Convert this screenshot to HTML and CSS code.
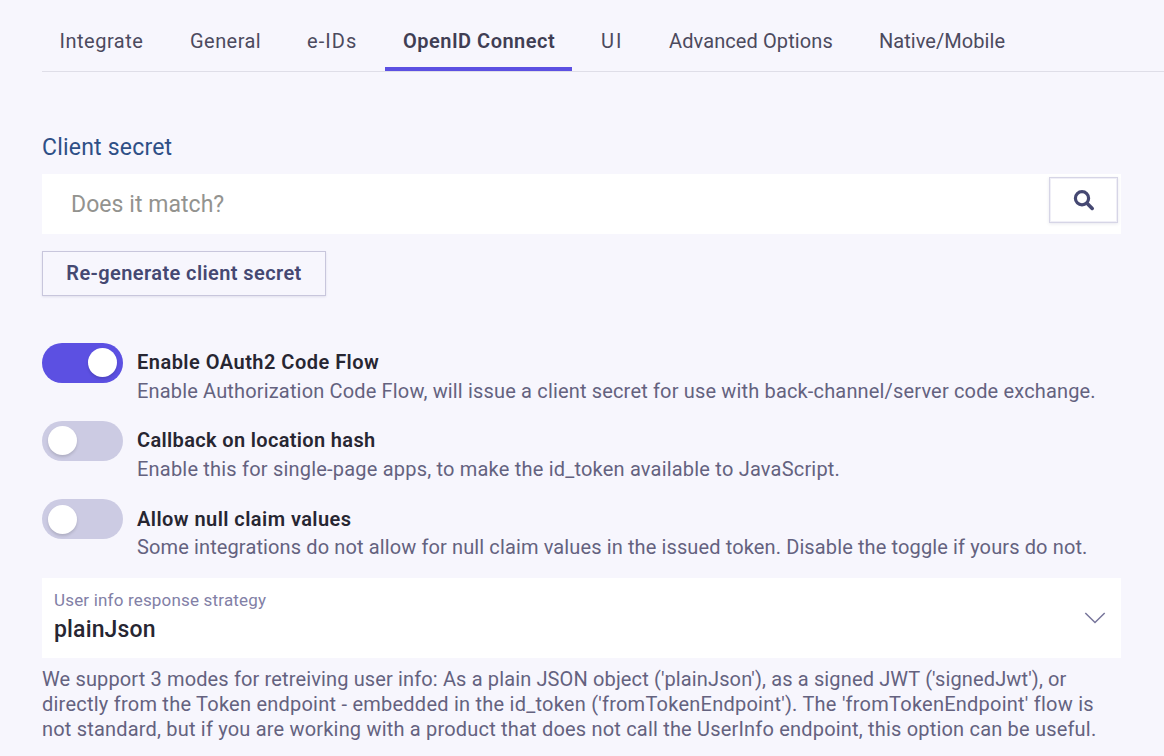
FILE: index.html
```html
<!DOCTYPE html>
<html lang="en">
<head>
<meta charset="utf-8">
<title>OpenID Connect settings</title>
<link rel="stylesheet" href="styles.css">
</head>
<body>
<main class="page">
  <nav class="tabs">
    <a class="tab t-integrate">Integrate</a>
    <a class="tab t-general">General</a>
    <a class="tab t-eids">e-IDs</a>
    <a class="tab active">OpenID Connect</a>
    <a class="tab t-ui">UI</a>
    <a class="tab t-advanced">Advanced Options</a>
    <a class="tab t-native">Native/Mobile</a>
  </nav>
  <section class="content">
    <label class="field-label">Client secret</label>
    <div class="secret-field">
      <span class="placeholder">Does it match?</span>
      <button class="search-button" aria-label="Check secret">
        <svg width="22" height="22" viewBox="0 0 22 22" fill="none" stroke="#454872">
          <circle cx="9" cy="9.2" r="6.6" stroke-width="3.2"/>
          <path d="M14 14.2L19.2 19.4" stroke-width="3.6" stroke-linecap="round"/>
        </svg>
      </button>
    </div>
    <button class="regenerate">Re-generate client secret</button>
    <div class="toggles">
      <div class="toggle-row">
        <span class="switch on"><span class="knob"></span></span>
        <div class="toggle-text">
          <div class="toggle-title n1">Enable OAuth2 Code Flow</div>
          <div class="toggle-help h1">Enable Authorization Code Flow, will issue a client secret for use with back-channel/server code exchange.</div>
        </div>
      </div>
      <div class="toggle-row">
        <span class="switch"><span class="knob"></span></span>
        <div class="toggle-text">
          <div class="toggle-title n2">Callback on location hash</div>
          <div class="toggle-help h2">Enable this for single-page apps, to make the id_token available to JavaScript.</div>
        </div>
      </div>
      <div class="toggle-row">
        <span class="switch"><span class="knob"></span></span>
        <div class="toggle-text last">
          <div class="toggle-title n3">Allow null claim values</div>
          <div class="toggle-help h3">Some integrations do not allow for null claim values in the issued token. Disable the toggle if yours do not.</div>
        </div>
      </div>
    </div>
    <div class="select">
      <div>
        <div class="select-label">User info response strategy</div>
        <div class="select-value">plainJson</div>
      </div>
      <svg class="chevron" width="22" height="14" viewBox="0 0 22 14" fill="none" stroke="#77759b" stroke-width="1.5">
        <path d="M1.3 2L11 11.5L20.7 2"/>
      </svg>
    </div>
    <p class="description">
      <span class="d1">We support 3 modes for retreiving user info: As a plain JSON object ('plainJson'), as a signed JWT ('signedJwt'), or</span>
      <span class="d2">directly from the Token endpoint - embedded in the id_token ('fromTokenEndpoint'). The 'fromTokenEndpoint' flow is</span>
      <span class="d3">not standard, but if you are working with a product that does not call the UserInfo endpoint, this option can be useful.</span>
    </p>
  </section>
</main>
</body>
</html>
```
FILE: styles.css
```css
* { box-sizing: border-box; }
body {
  margin: 0;
  background: #f7f6fd;
  color: #64627f;
  font-family: Roboto, "Liberation Sans", sans-serif;
  font-size: 20px;
  line-height: 25px;
  white-space: nowrap;
  overflow: hidden;
}
button { font: inherit; margin: 0; padding: 0; cursor: pointer; }
.page { padding-left: 42px; height: 756px; }
.tabs { display: flex; height: 72px; border-bottom: 1px solid #dfdee8; }
.tab {
  flex: none;
  height: 71px;
  padding: 29px 0 0 18px;
  color: #4c4a5e;
}
.t-integrate { width: 130px; padding-left: 17.5px; letter-spacing: 0.52px; }
.t-general { width: 117px; letter-spacing: 0.45px; }
.t-eids { width: 96px; letter-spacing: 1.1px; }
.active {
  width: 187px;
  border-bottom: 4.5px solid #5c50e2;
  font-weight: 600;
  color: #403e54;
  letter-spacing: 0.48px;
}
.t-ui { width: 79px; padding-left: 29px; letter-spacing: 2px; }
.t-advanced { width: 210px; letter-spacing: 0.1px; }
.t-native { letter-spacing: 0.05px; }
.content { display: flex; flex-direction: column; align-items: flex-start; width: 1079px; }
.field-label {
  margin-top: 61px;
  height: 41px;
  line-height: 30px;
  font-size: 23px;
  color: #2e4f86;
  letter-spacing: 0.2px;
}
.secret-field {
  display: flex;
  align-items: flex-start;
  justify-content: space-between;
  width: 1079px;
  height: 60px;
  padding: 3px 3px 0 29px;
  background: #fff;
}
.placeholder { line-height: 56px; font-size: 23px; color: #93938f; letter-spacing: 0.05px; }
.search-button {
  display: flex;
  align-items: center;
  justify-content: center;
  width: 69px;
  height: 46px;
  border: 1px solid #d6d5e6;
  background: #fff;
  box-shadow: inset 0 0 0 1px #f0eff7, 0 1px 3px rgba(70, 70, 120, .12);
}
.regenerate {
  margin-top: 17px;
  width: 284px;
  height: 45px;
  border: 1px solid #c8c6dc;
  background: transparent;
  box-shadow: 0 1px 2px rgba(70, 70, 120, .12);
  color: #454872;
  font-weight: 600;
  letter-spacing: 0.4px;
}
.toggles { display: grid; grid-auto-rows: 78.4px; margin-top: 46.6px; }
.toggle-row { display: flex; gap: 14px; }
.switch {
  display: flex;
  align-items: center;
  width: 81px;
  height: 40px;
  padding: 0 6px;
  border-radius: 20px;
  background: #cccbe3;
}
.switch.on { justify-content: flex-end; background: #5c50e2; }
.knob { width: 29px; height: 29px; border-radius: 50%; background: #fff; box-shadow: 0 2px 3px rgba(0, 0, 0, .14); }
.toggle-text { padding-top: 7.2px; }
.toggle-title { height: 28.8px; color: #272632; font-weight: 600; }
.last { padding-top: 8px; }
.last .toggle-title { height: 28px; }
.n1 { letter-spacing: 0.48px; }
.n2 { letter-spacing: 0.34px; }
.n3 { letter-spacing: 0.44px; }
.h1 { letter-spacing: 0.162px; }
.h2 { letter-spacing: 0.2px; }
.h3 { letter-spacing: 0.12px; }
.select {
  display: flex;
  justify-content: space-between;
  width: 1079px;
  height: 80px;
  padding: 10px 15px 0 12px;
  background: #fff;
}
.select-label { font-size: 17px; color: #8280a6; letter-spacing: 0.18px; }
.select-value { margin-top: 4px; font-size: 23px; line-height: 25px; font-weight: 500; color: #272632; letter-spacing: 0.15px; }
.chevron { margin-top: 23.5px; }
.description { display: flex; flex-direction: column; align-items: flex-start; margin: 9px 0 0; }
.d1 { letter-spacing: 0.137px; }
.d2 { letter-spacing: 0.235px; }
.d3 { letter-spacing: 0.19px; }
```
